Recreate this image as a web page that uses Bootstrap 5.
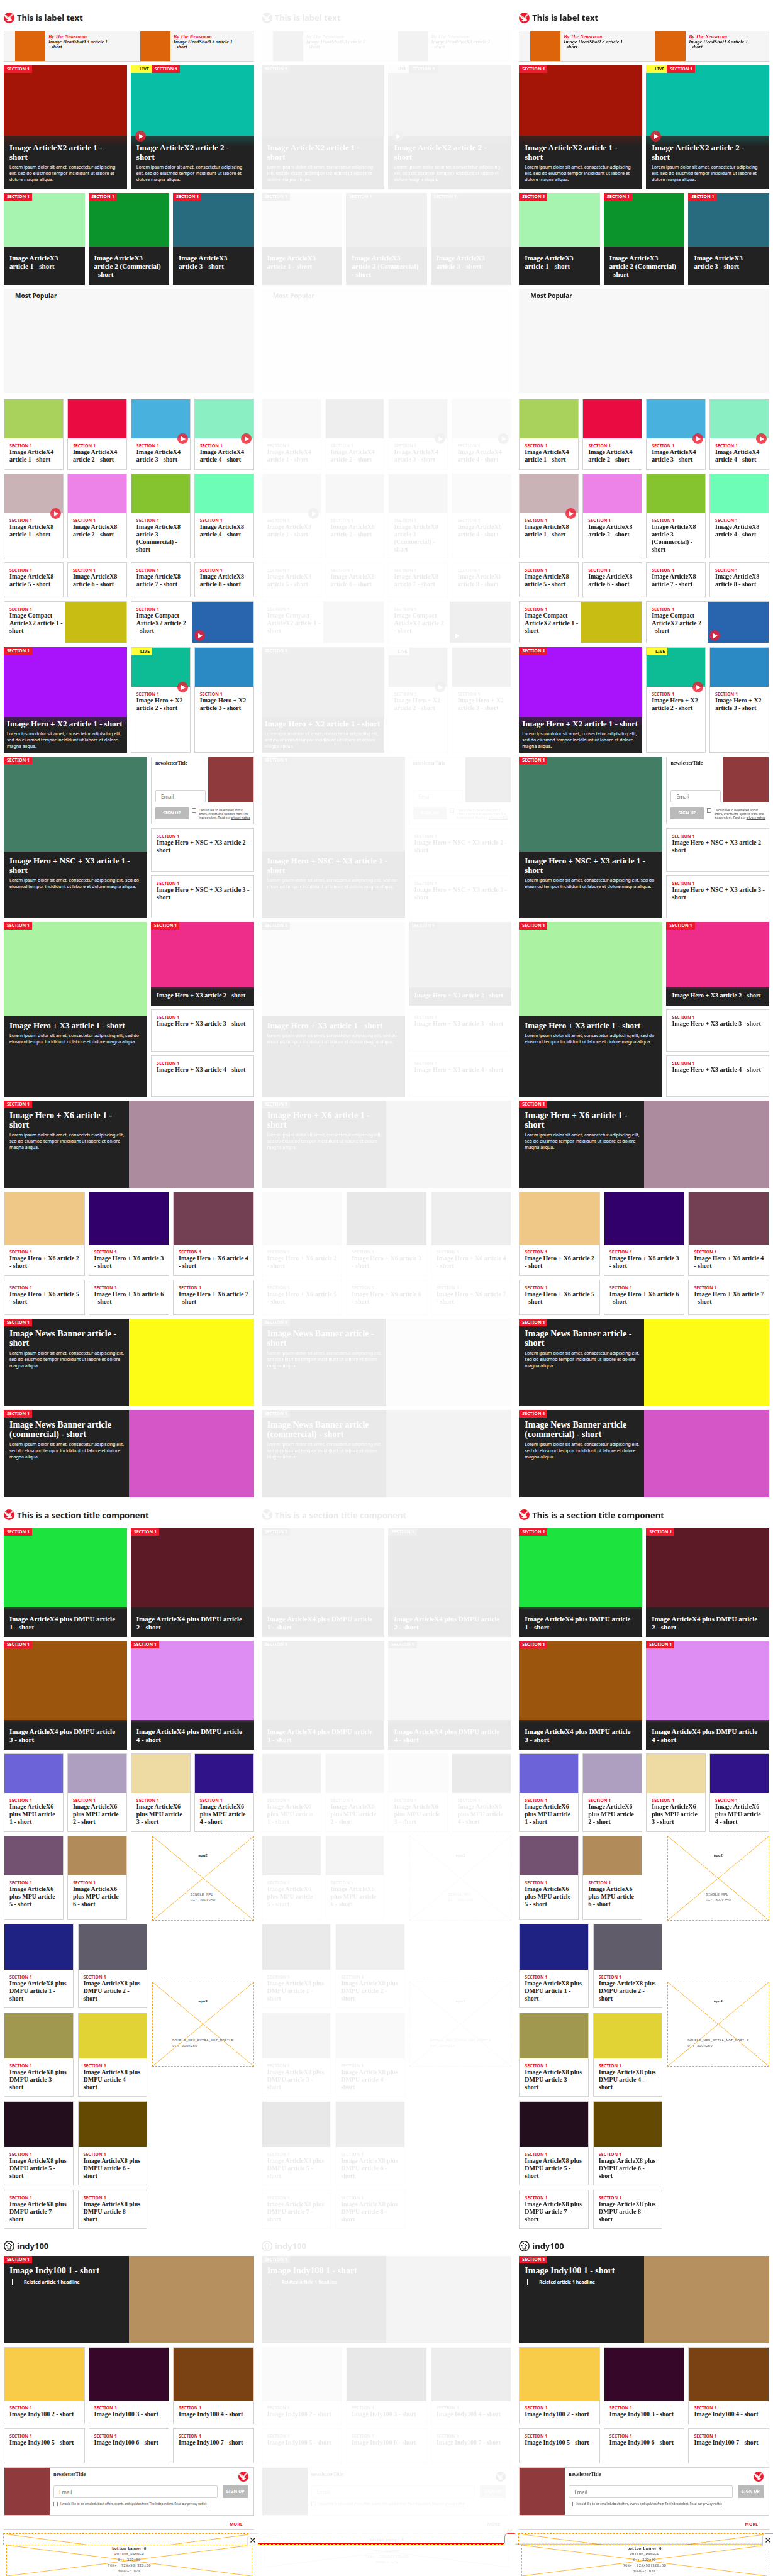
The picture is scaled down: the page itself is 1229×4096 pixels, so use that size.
<!DOCTYPE html>
<html lang="en">
<head>
<meta charset="utf-8">
<meta name="viewport" content="width=device-width, initial-scale=1">
<title>Section front comparison</title>
<link href="https://cdn.jsdelivr.net/npm/bootstrap@5.3.0/dist/css/bootstrap.min.css" rel="stylesheet">
<style>
  :root { --ink: #222; --brand: #ed1a2e; --rule: #d3d3d3; --ad: #ffa500; }
  body { background: #fff; color: var(--ink); font-family: "Noto Sans", sans-serif; font-size: 7px; line-height: 10px; }
  a { color: inherit; }

  /* panes */
  .pane { position: relative; overflow: hidden; }
  .pane-body { padding: 0 6px; }
  .pane-diff .pane-inner { filter: url(#fade); }
  .bands > .band { margin-bottom: 6px; }
  .band.row { --bs-gutter-x: 6px; --bs-gutter-y: 0; }
  .band > .split-main { flex: 0 0 auto; width: 58%; }

  /* headings */
  .pane-title { font-size: 13px; line-height: 16px; font-weight: 700; margin: 0; }
  .pane-title svg { width: 17px; height: 17px; }
  .title-first { height: 49px; padding-top: 7px; }
  .title-mid { height: 49px; padding-top: 6px; margin-top: -6px; }
  .title-indy { height: 43px; padding-top: 11px; margin-top: -6px; }

  /* stories */
  .story { position: relative; display: flex; flex-direction: column; width: 100%; height: 100%; text-decoration: none; }
  .story-dark { background: var(--ink); color: #fff; }
  .story-light { background: #fff; color: var(--ink); border: 1px solid var(--rule); }
  .pic { flex: 0 0 auto; position: relative; background: var(--tone); }
  .copy { padding: 8px 3px 8px 9px; }
  .story-light .copy { padding-left: 8px; }
  .kicker { display: block; color: var(--brand); font-weight: 700; font-size: 7px; line-height: 8px; }
  .head { font-family: "Liberation Serif", serif; font-weight: 700; font-size: 10px; line-height: 12px; margin: 0; }
  .head-md { font-size: 11px; line-height: 13px; }
  .head-lg { font-size: 13px; line-height: 15px; }
  .head-xl { font-size: 14px; line-height: 15px; }
  .desc { font-size: 7px; line-height: 10px; margin: 4px 0 0; }
  .fade-in { background: linear-gradient(rgba(34,34,34,.75), #222 var(--fade)), var(--tone); flex: 1 0 auto; }
  .fade-lg { --fade: 17px; }
  .fade-sm { --fade: 4px; }
  .tags { position: absolute; z-index: 1; top: 0; left: 0; display: flex; font-weight: 700; font-size: 7px; line-height: 12px; color: #fff; }
  .tag-section { background: var(--brand); padding: 0 4px 0 5px; }
  .tag-live { background: #fffc38; color: var(--ink); padding-right: 4px; width: 33px; text-align: right; }
  .play { position: absolute; z-index: 2; width: 17px; height: 17px; border-radius: 50%; background: rgba(240,26,46,.8); bottom: -9px; }
  .play::after { content: ""; position: absolute; left: 6px; top: 5px; border-left: 7px solid #fff; border-top: 4px solid transparent; border-bottom: 4px solid transparent; }
  .play-end { right: 3px; }
  .play-start { left: 7px; }
  .play-inner { left: 3px; bottom: 3px; }
  .half { width: 50%; flex: 0 0 auto; }

  /* headshots */
  .shots { height: 49px; background: #f5f5f5; border: solid var(--rule); border-width: 1px 0; }
  .shot-face { width: 48px; background: #de640c; margin-left: 18px; }
  .shot-copy { font: italic 700 8px/8px "Liberation Serif", serif; padding: 5px 0 0 5px; margin: 0; }
  .byline { color: var(--brand); }

  /* band sizes */
  .b-x2 { height: 197px; }  .b-x2 .pic { height: 112px; }  .b-x2 .copy { padding-top: 11px; }
  .b-x3 { height: 146px; }  .b-x3 .pic { height: 85px; }  .b-x3 .copy { padding-top: 12px; }
  .popular { height: 166px; background: #f7f7f7; }
  .bands > .popular { margin-bottom: 9px; }
  .popular h2 { font-size: 10px; line-height: 14px; font-weight: 700; padding: 4px 18px; margin: 0; }
  .b-x4 { height: 113px; }  .b-x4 .pic { height: 62px; }
  .b-x8 { height: 135px; }  .b-x8 .pic { height: 62px; }
  .b-flat { height: 56px; }
  .b-compact { height: 67px; }
  .b-h2 { height: 168px; }  .b-h2 .pic { height: 62px; }  .b-h2 .story-dark .pic { height: 111px; }
  .b-h2 .story-dark .copy { padding: 3px 3px 0 5px; }
  .b-nsc { height: 257px; } .b-nsc .story-dark .pic { height: 151px; }
  .b-h3 { height: 278px; }  .b-h3 .pic { height: 150px; } .b-h3 .side-lead .pic { height: 104px; }
  .b-nsc .story-dark .copy, .b-h3 .story-dark .copy { padding-top: 7px; }
  .side { display: flex; flex-direction: column; gap: 6px; }
  .side > * { flex: 1 1 0; }
  .b-nsc .side > .signup { flex: 0 0 108px; }
  .b-h3 .side > .side-lead { flex: 0 0 133px; }
  .b-banner { height: 139px; }
  .b-banner .copy { padding-top: 16px; }
  .b-x6 { height: 134px; }  .b-x6 .pic { height: 84px; }
  .b-x6 .copy, .b-indy .copy { padding-top: 7px; }
  .b-duo { height: 173px; } .b-duo .pic { height: 126px; } .b-duo .copy { padding-top: 12px; }
  .b-mpu { height: 125px; } .b-mpu .pic { height: 62px; }
  .b-mpu-ad { height: 134px; }
  .b-tall .row { --bs-gutter-x: 7px; --bs-gutter-y: 0; height: 134px; margin-bottom: 7px; }
  .b-tall .row:last-child { height: 62px; margin-bottom: 0; }
  .b-tall .pic { height: 72px; }
  .b-indy { height: 123px; } .b-indy .pic { height: 85px; }

  /* newsletter */
  .signup { border: 1px solid var(--rule); }
  .signup-pic { width: 72px; background: #8f3a3d; flex: 0 0 auto; }
  .signup-tall .signup-pic { height: 72px; }
  .signup-title { font-family: "Liberation Serif", serif; font-weight: 700; font-size: 8px; line-height: 10px; margin: 0; }
  .signup-fields { padding: 5px 4px 0 6px; }
  .signup-send { padding: 7px 0 0 6px; gap: 5px; }
  .mail { height: 20px; min-height: 0; border: 1px solid var(--rule); border-radius: 2px; padding: 0 8px; font-size: 8px; line-height: 18px; }
  .mail::placeholder { color: #757575; }
  .join { height: 20px; background: #bababa; color: #fff; border: 0; border-radius: 1px; font-size: 7px; line-height: 18px; font-weight: 700; padding: 0; }
  .join:hover { background: #aaa; color: #fff; }
  .join-wide { width: 53px; } .join-narrow { width: 41px; }
  .consent { font-family: Lato, sans-serif; font-size: 5px; line-height: 6px; color: #555; display: flex; gap: 4px; }
  .signup-send .consent { padding-top: 2px; }
  .consent input { appearance: none; flex: 0 0 auto; width: 7px; height: 7px; border: 1px solid #888; margin: 0; background: #fff; }
  .signup-wide { height: 77px; }
  .signup-wide .brandmark { width: 16px; height: 16px; }
  .signup-main { padding: 6px 8px 0 6px; display: flex; flex-direction: column; gap: 6px; }
  .more { height: 23px; border-bottom: 1px solid var(--rule); font-weight: 700; color: var(--brand); line-height: 14px; padding: 7px 18px 0 0; margin-top: -6px; text-align: right; }
  .more a { text-decoration: none; }
  .related { font-weight: 700; margin: 6px 0 0 4px; line-height: 9px; border-left: 1px solid #fff; padding-left: 18px; }

  /* ad slots */
  .slot { position: relative; z-index: 0; border: 1px dashed var(--ad); font: 6px/9px "Liberation Mono", monospace; color: #666; display: flex; flex-direction: column; align-items: center; }
  .slot > svg { position: absolute; inset: 0; width: 100%; height: 100%; z-index: -1; }
  .slot strong { color: var(--ink); }
  .slot-box { width: 162px; height: 135px; }
  .slot-box strong { margin-top: 26px; }
  .slot-box p { margin: 53px 0 0; }
  .slot-late { margin-top: 92px; }
  .slot-strip { height: 54px; margin: -1px -1px 14px; }
  .dock { position: absolute; left: 0; right: 0; bottom: 0; height: 50px; padding: 0 9px 0 10px; background: #fff; z-index: 3; }
  .pane-late .dock { box-shadow: 0 -1px 2px rgba(0,0,0,.3); }
  .slot-dock { height: 50px; border-bottom: 0; padding-top: 1px; }
  .close-tab { position: absolute; right: 0; top: -18px; width: 17px; height: 20px; background: #fff; border: solid #e4e4e4; border-width: 1px 0 0 1px; border-radius: 6px 0 0 0; padding: 0; display: flex; align-items: center; justify-content: center; }
  .pane-late .close-tab { border-color: #aaa #aaa #ccc #ccc; }
  .close-tab svg { width: 8px; height: 8px; }
  .delta { position: absolute; left: 0; right: 17px; bottom: 49px; height: 3px; z-index: 4; background: repeating-linear-gradient(90deg, #ff0 0 3px, #f00 3px 6px); border-top: 1px solid #f00; }
  .delta-tab { position: absolute; right: 0; bottom: 52px; width: 17px; height: 16px; z-index: 4; border: solid #f33; border-width: 1px 0 0 1px; border-left-color: #999; border-radius: 6px 0 0 0; }
</style>
<script src="https://cdn.jsdelivr.net/npm/bootstrap@5.3.0/dist/js/bootstrap.bundle.min.js"></script>
</head>
<body>
<svg width="0" height="0" class="position-absolute" aria-hidden="true">
  <filter id="fade" color-interpolation-filters="sRGB" x="0" y="0" width="100%" height="100%">
    <feColorMatrix type="matrix" values=".03 .059 .011 0 .9  .03 .059 .011 0 .9  .03 .059 .011 0 .9  0 0 0 1 0"/>
  </filter>
  <symbol id="eagle" viewBox="0 0 34 34">
    <circle cx="17" cy="17" r="17" fill="#ed1a2e"/>
    <path fill="#fff" d="M4 7l4 2 5 2 3 4 1 1 3-6 5-3 5-2-2 4-2 1 1 1-3 2 1 1-3 2 0 3-3 2 3 1 4 0-1 2 2 1-5 1-4 2-6 1 3-3-5 0-2-1 4-1 3-2-4 0-2-2-1-3-3-1 1-1-3-2 1-1-3-2 1-1z"/>
    <path stroke="#ed1a2e" stroke-width=".7" fill="none" d="M7 10l7 5M9 13l5 4M27 9l-7 5M26 12l-6 4"/>
  </symbol>
  <symbol id="up" viewBox="0 0 34 34">
    <circle cx="17" cy="17" r="15.5" fill="#fff" stroke="#222" stroke-width="3"/>
    <path fill="none" stroke="#222" stroke-width="2" stroke-linejoin="round" d="M17 7l9 9h-4.500v10h-9V16H8z"/>
  </symbol>
</svg>

<main class="container-fluid p-0">
  <div class="row g-0" id="panes"></div>
</main>

<script>
const br = t => t.replace(/\|/g, '<br>');
const lorem = 'Lorem ipsum dolor sit amet, consectetur ';
const kicker = '<span class="kicker">SECTION 1</span>';
const sectionTag = '<span class="tag-section">SECTION 1</span>';
const liveTag = '<span class="tag-live">LIVE</span>';
const cross = '<svg viewBox="0 0 100 100" preserveAspectRatio="none" aria-hidden="true"><path d="M0 0L100 100M100 0L0 100" stroke="#ffa500" stroke-width=".8" vector-effect="non-scaling-stroke"/></svg>';
const play = where => where ? `<span class="play play-${where}"></span>` : '';

// bordered story: picture on top, kicker and headline below
const light = (title, tone, o = {}) => `<a href="#" class="story story-light">
  ${o.live ? `<span class="tags">${liveTag}</span>` : ''}
  ${tone ? `<div class="pic" style="--tone:${tone}">${play(o.play)}</div>` : ''}
  <div class="copy">${kicker}<h3 class="head">${br(title)}</h3></div></a>`;

// dark story: picture on top, headline on a dark panel
const dark = (title, tone, o = {}) => `<a href="#" class="story story-dark" style="--tone:${tone}">
  <span class="tags">${o.live ? liveTag : ''}${sectionTag}</span>
  <div class="pic">${play(o.play)}</div>
  <div class="copy ${o.fade ? 'fade-in fade-' + o.fade : ''}"><h3 class="head head-${o.size || 'md'}">${br(title)}</h3>
  ${o.desc ? `<p class="desc">${br(lorem + o.desc)}</p>` : ''}</div></a>`;

// dark banner: text left, picture right
const banner = (title, tone, extra) => `<div class="band b-banner"><a href="#" class="story story-dark flex-row" style="--tone:${tone}">
  <span class="tags">${sectionTag}</span>
  <div class="half copy"><h3 class="head head-xl">${br(title)}</h3>${extra}</div><div class="half pic"></div></a></div>`;
const bannerDesc = `<p class="desc">${br(lorem + 'adipiscing elit,|sed do eiusmod tempor incididunt ut labore et dolore|magna aliqua.')}</p>`;

const compact = (title, tone, p) => `<a href="#" class="story story-light flex-row">
  <div class="half copy">${kicker}<h3 class="head">${br(title)}</h3></div>
  <div class="half pic" style="--tone:${tone}">${play(p)}</div></a>`;

const row = (cls, col, items) => `<div class="band row ${cls}">${items.map(i => `<div class="${col} h-100">${i}</div>`).join('')}</div>`;
const shot = `<div class="w-50 d-flex"><div class="shot-face"></div><p class="shot-copy"><span class="byline">By The Newsroom</span><br>Image HeadShotX3 article 1<br>- short</p></div>`;
const mail = id => `<input type="email" class="form-control mail" id="mail-${id}" placeholder="Email" aria-label="Email">`;
const consent = (id, text) => `<div class="consent"><input type="checkbox" id="ok-${id}"><label for="ok-${id}">${br(text)} <a href="#">privacy notice</a></label></div>`;
const slotBox = (name, size, cls = '') => `<div class="slot slot-box ms-auto ${cls}">${cross}<strong>${name}</strong><p>${size}<br>0+: 300x250</p></div>`;

const pane = n => `
<div class="pane-inner">
<div class="pane-body"><div class="bands">
  <h1 class="pane-title title-first d-flex align-items-center gap-1"><svg><use href="#eagle"/></svg>This is label text</h1>
  <div class="band shots d-flex">${shot}${shot}</div>
  ${row('b-x2', 'col-6', [
    dark('Image ArticleX2 article 1 -|short', '#a51507', { size: 'lg', fade: 'lg', desc: 'adipiscing|elit, sed do eiusmod tempor incididunt ut labore et|dolore magna aliqua.' }),
    dark('Image ArticleX2 article 2 -|short', '#08bea4', { size: 'lg', fade: 'lg', live: 1, play: 'start', desc: 'adipiscing|elit, sed do eiusmod tempor incididunt ut labore et|dolore magna aliqua.' })])}
  ${row('b-x3', 'col-4', [
    dark('Image ArticleX3|article 1 - short', '#a6f4b0'),
    dark('Image ArticleX3|article 2 (Commercial)|- short', '#0c942c'),
    dark('Image ArticleX3|article 3 - short', '#286b7e')])}
  <section class="band popular"><h2>Most Popular</h2></section>
  ${row('b-x4', 'col-3', [
    light('Image ArticleX4|article 1 - short', '#a8d25c'),
    light('Image ArticleX4|article 2 - short', '#ea0c40'),
    light('Image ArticleX4|article 3 - short', '#49b1de', { play: 'end' }),
    light('Image ArticleX4|article 4 - short', '#8aefc3', { play: 'end' })])}
  ${row('b-x8', 'col-3', [
    light('Image ArticleX8|article 1 - short', '#c9b3b7', { play: 'end' }),
    light('Image ArticleX8|article 2 - short', '#ed82e9'),
    light('Image ArticleX8|article 3|(Commercial) -|short', '#86c42f'),
    light('Image ArticleX8|article 4 - short', '#6dfdb7')])}
  ${row('b-flat', 'col-3', [5, 6, 7, 8].map(i => light(`Image ArticleX8|article ${i} - short`)))}
  ${row('b-compact', 'col-6', [
    compact('Image Compact|ArticleX2 article 1 -|short', '#c7bd13'),
    compact('Image Compact|ArticleX2 article 2|- short', '#2865ae', 'inner')])}
  <div class="band row b-h2">
    <div class="col-6 h-100">${dark('Image Hero + X2 article 1 - short', '#a913fb', { size: 'lg', fade: 'lg', desc: 'adipiscing elit,|sed do eiusmod tempor incididunt ut labore et dolore|magna aliqua.' })}</div>
    <div class="col-3 h-100">${light('Image Hero + X2|article 2 - short', '#0dbb95', { live: 1, play: 'end' })}</div>
    <div class="col-3 h-100">${light('Image Hero + X2|article 3 - short', '#2b8ac4')}</div>
  </div>
  <div class="band row b-nsc">
    <div class="split-main h-100">${dark('Image Hero + NSC + X3 article 1 -|short', '#437d66', { size: 'lg', desc: 'adipiscing elit, sed do|eiusmod tempor incididunt ut labore et dolore magna aliqua.' })}</div>
    <div class="col side h-100">
      <form class="signup signup-tall">
        <div class="d-flex">
          <div class="signup-fields d-flex flex-column justify-content-between flex-fill"><h3 class="signup-title">newsletterTitle</h3><div>${mail('a' + n)}</div></div>
          <div class="signup-pic"></div>
        </div>
        <div class="signup-send d-flex"><button type="button" class="btn join join-wide flex-shrink-0">SIGN UP</button>
        ${consent('a' + n, 'I would like to be emailed about|offers, events and updates from The|Independent. Read our')}</div>
      </form>
      <div>${light('Image Hero + NSC + X3 article 2 -|short')}</div>
      <div>${light('Image Hero + NSC + X3 article 3 -|short')}</div>
    </div>
  </div>
  <div class="band row b-h3">
    <div class="split-main h-100">${dark('Image Hero + X3 article 1 - short', '#abf3a3', { size: 'lg', desc: 'adipiscing elit, sed do|eiusmod tempor incididunt ut labore et dolore magna aliqua.' })}</div>
    <div class="col side h-100">
      <div class="side-lead">${dark('Image Hero + X3 article 2 - short', '#ed2d89', { size: 'sm', fade: 'sm' })}</div>
      <div>${light('Image Hero + X3 article 3 - short')}</div>
      <div>${light('Image Hero + X3 article 4 - short')}</div>
    </div>
  </div>
  ${banner('Image Hero + X6 article 1 -|short', '#ac8b9f', bannerDesc)}
  ${row('b-x6', 'col-4', [
    light('Image Hero + X6 article 2|- short', '#efc887'),
    light('Image Hero + X6 article 3|- short', '#32006b'),
    light('Image Hero + X6 article 4|- short', '#733f53')])}
  ${row('b-flat', 'col-4', [5, 6, 7].map(i => light(`Image Hero + X6 article ${i}|- short`)))}
  ${banner('Image News Banner article -|short', '#fdfc17', bannerDesc)}
  ${banner('Image News Banner article|(commercial) - short', '#d557c7', bannerDesc)}
  <h2 class="pane-title title-mid d-flex align-items-center gap-1"><svg><use href="#eagle"/></svg>This is a section title component</h2>
  ${row('b-duo', 'col-6', [
    dark('Image ArticleX4 plus DMPU article|1 - short', '#1de33f', { fade: 'sm' }),
    dark('Image ArticleX4 plus DMPU article|2 - short', '#5c1a26', { fade: 'sm' })])}
  ${row('b-duo', 'col-6', [
    dark('Image ArticleX4 plus DMPU article|3 - short', '#9c550c', { fade: 'sm' }),
    dark('Image ArticleX4 plus DMPU article|4 - short', '#de8ef2', { fade: 'sm' })])}
  ${row('b-mpu', 'col-3', ['#6d63d8', '#ae9fc0', '#eedaa3', '#311389'].map((c, i) => light(`Image ArticleX6|plus MPU article|${i + 1} - short`, c)))}
  <div class="band row b-mpu b-mpu-ad">
    <div class="col-3 h-100">${light('Image ArticleX6|plus MPU article|5 - short', '#735170')}</div>
    <div class="col-3 h-100">${light('Image ArticleX6|plus MPU article|6 - short', '#b18b59')}</div>
    <div class="col-6">${slotBox('mpu2', 'SINGLE_MPU')}</div>
  </div>
  <div class="band row b-tall">
    <div class="split-main">
      ${[['#1f2183', '#605c69'], ['#a19850', '#e1d335'], ['#230e1e', '#644903'], []].map((c, r) => `<div class="row">${[0, 1].map(k =>
        `<div class="col-6 h-100">${light(`Image ArticleX8 plus|DMPU article ${r * 2 + k + 1} -|short`, c[k])}</div>`).join('')}</div>`).join('')}
    </div>
    <div class="col">${slotBox('mpu3', 'DOUBLE_MPU_EXTRA_NOT_MOBILE', 'slot-late')}</div>
  </div>
  <h2 class="pane-title title-indy d-flex align-items-center gap-1"><svg><use href="#up"/></svg>indy100</h2>
  ${banner('Image Indy100 1 - short', '#b6905e', '<p class="related">Related article 1 headline</p>')}
  ${row('b-indy', 'col-4', ['#f8cc48', '#37072a', '#7a4112'].map((c, i) => light(`Image Indy100 ${i + 2} - short`, c)))}
  ${row('b-flat', 'col-4', [5, 6, 7].map(i => light(`Image Indy100 ${i} - short`)))}
  <form class="band signup signup-wide d-flex">
    <div class="signup-pic"></div>
    <div class="signup-main flex-fill">
      <div class="d-flex justify-content-between"><h3 class="signup-title">newsletterTitle</h3><svg class="brandmark"><use href="#eagle"/></svg></div>
      <div class="d-flex gap-2"><div class="flex-fill">${mail('b' + n)}</div><button type="button" class="btn join join-narrow">SIGN UP</button></div>
      ${consent('b' + n, 'I would like to be emailed about offers, events and updates from The Independent. Read our')}
    </div>
  </form>
  <div class="band more"><a href="#">MORE</a></div>
  <div class="slot slot-strip">${cross}</div>
</div></div>
<aside class="dock">
  <div class="slot slot-dock">${cross}<strong>bottom_banner_0</strong><span>BOTTOM_BANNER</span><span>0+: 320x50</span><span>768+: 728x90|320x50</span><span>1000+: n/a</span></div>
  <button type="button" class="close-tab" aria-label="Close"><svg viewBox="0 0 8 8"><path d="M.5 .5l7 7M7.500 .5l-7 7" stroke="#222" stroke-width="1.200"/></svg></button>
</aside>
</div>`;

document.getElementById('panes').innerHTML = ['', 'pane-diff', 'pane-late'].map((cls, n) =>
  `<div class="col-4 pane ${cls}">${pane(n)}${cls === 'pane-diff' ? '<div class="delta"></div><div class="delta-tab"></div>' : ''}</div>`).join('');
</script>
</body>
</html>
